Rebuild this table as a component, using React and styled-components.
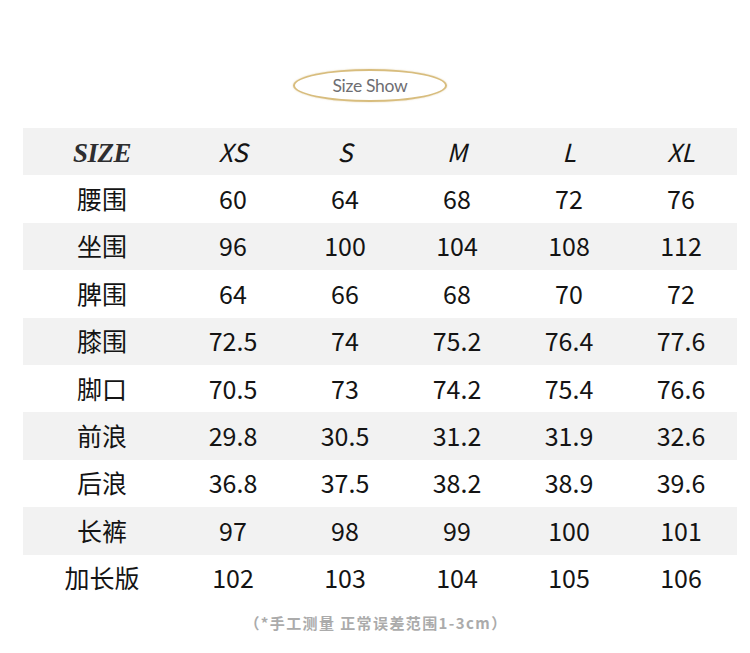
import React from "react";
import styled, { createGlobalStyle } from "styled-components";

const Global = createGlobalStyle`
  html, body { margin: 0; padding: 0; background: #fff; }
  body { font-family: "Noto Sans CJK SC", "Noto Sans", sans-serif; }
`;

const Page = styled.div`
  width: 750px;
  height: 653px;
  display: flex;
  flex-direction: column;
  align-items: flex-start;
  padding: 69px 0 0 23px;
  box-sizing: border-box;
`;

const Badge = styled.div`
  width: 154px;
  height: 33px;
  margin-left: 270px;
  box-sizing: border-box;
  border: 2.5px solid #d8bd7e;
  border-radius: 50%;
  box-shadow: 0 0 1.5px rgba(200, 170, 100, 0.6);
  display: flex;
  align-items: center;
  justify-content: center;
  font-family: Lato, "Open Sans", sans-serif;
  font-size: 17.5px;
  color: #6e6e72;
  letter-spacing: -0.3px;
`;

const Table = styled.div`
  margin-top: 26px;
  width: 714px;
  display: grid;
  grid-template-columns: 154px repeat(5, 112px);
  grid-auto-rows: 47.4px;
`;

const Row = styled.div`
  display: contents;
`;

const Cell = styled.div`
  display: flex;
  align-items: center;
  justify-content: center;
  background: ${(p) => (p.$shaded ? "#f2f2f2" : "#ffffff")};
  font-family: "Noto Sans CJK SC", sans-serif;
  font-size: 25px;
  color: #141414;
  font-style: ${(p) => (p.$italic ? "italic" : "normal")};
  padding-left: ${(p) => (p.$label ? "4px" : "0")};
  padding-bottom: 2px;
  box-sizing: border-box;
`;

const SizeTitle = styled.span`
  font-family: "Liberation Serif", serif;
  font-weight: bold;
  font-style: italic;
  font-size: 27px;
  color: #2e2e30;
  margin-top: 6px;
  letter-spacing: -0.5px;
`;

const Note = styled.div`
  width: 706px;
  margin-top: 10px;
  text-align: center;
  font-family: "Noto Sans CJK SC", sans-serif;
  font-weight: bold;
  font-size: 15px;
  letter-spacing: 1.4px;
  color: #ababab;
`;

const sizes = ["XS", "S", "M", "L", "XL"];
const rows = [
  ["腰围", "60", "64", "68", "72", "76"],
  ["坐围", "96", "100", "104", "108", "112"],
  ["脾围", "64", "66", "68", "70", "72"],
  ["膝围", "72.5", "74", "75.2", "76.4", "77.6"],
  ["脚口", "70.5", "73", "74.2", "75.4", "76.6"],
  ["前浪", "29.8", "30.5", "31.2", "31.9", "32.6"],
  ["后浪", "36.8", "37.5", "38.2", "38.9", "39.6"],
  ["长裤", "97", "98", "99", "100", "101"],
  ["加长版", "102", "103", "104", "105", "106"],
];

export default function App() {
  return (
    <Page>
      <Global />
      <Badge>Size Show</Badge>
      <Table>
        <Row>
          <Cell $shaded $label>
            <SizeTitle>SIZE</SizeTitle>
          </Cell>
          {sizes.map((s) => (
            <Cell key={s} $shaded $italic>
              {s}
            </Cell>
          ))}
        </Row>
        {rows.map((r, i) => (
          <Row key={r[0]}>
            {r.map((v, j) => (
              <Cell key={j} $shaded={i % 2 === 1} $label={j === 0}>
                {v}
              </Cell>
            ))}
          </Row>
        ))}
      </Table>
      <Note>（*手工测量 正常误差范围1-3cm）</Note>
    </Page>
  );
}
